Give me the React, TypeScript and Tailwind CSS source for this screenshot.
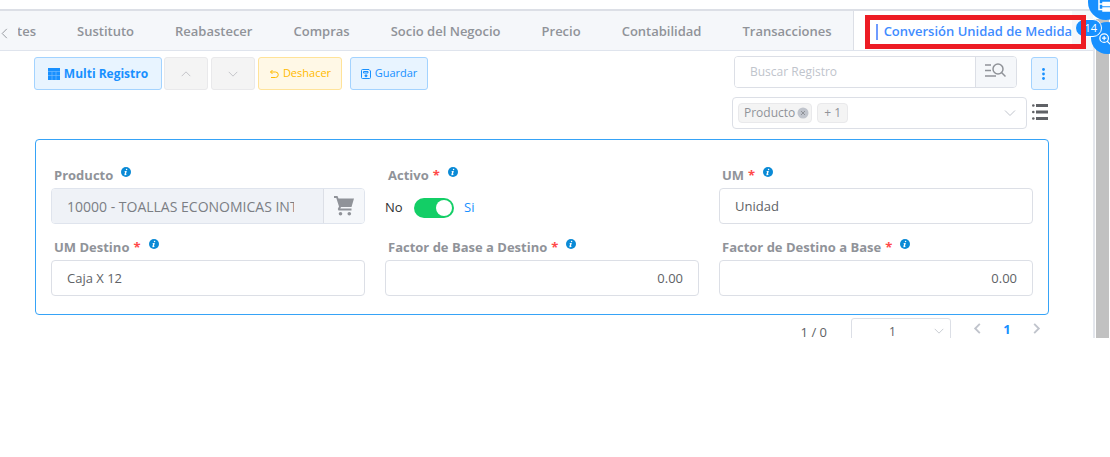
import React from "react";

const tabs = [
  "Sustituto",
  "Reabastecer",
  "Compras",
  "Socio del Negocio",
  "Precio",
  "Contabilidad",
  "Transacciones",
];

function Chevron({ dir, className }: { dir: "up" | "down" | "left" | "right"; className: string }) {
  const d = {
    up: "M2 9.5 7 4.5l5 5",
    down: "M2 4.5l5 5 5-5",
    left: "M9.5 2l-5 5 5 5",
    right: "M4.5 2l5 5-5 5",
  }[dir];
  return (
    <svg viewBox="0 0 14 14" className={className} fill="none" stroke="currentColor" aria-hidden="true">
      <path d={d} />
    </svg>
  );
}

function InfoIcon() {
  return (
    <svg viewBox="0 0 20 20" className="mb-2 ml-2 size-[10px] shrink-0" aria-hidden="true">
      <circle cx="10" cy="10" r="10" fill="#0a8ad6" />
      <path
        d="M11.2 3.4a1.5 1.5 0 1 1-.1 3 1.5 1.5 0 0 1 .1-3ZM7.4 8h4.2l-1.7 6.4c-.1.5.3.5 1.4-.4l.5.6c-1.4 1.5-2.6 2-3.6 2-1.200 0-1.600-.8-1.300-1.900L8.200 9.300H7Z"
        fill="#fff"
      />
    </svg>
  );
}

function Field({
  id,
  label,
  required,
  children,
}: {
  id: string;
  label: string;
  required?: boolean;
  children: React.ReactNode;
}) {
  return (
    <div className="min-w-0">
      <label htmlFor={id} className="flex h-9 items-center pl-[3px] pt-3 text-[13px] font-bold text-[#909399]">
        {label}
        {required && <span className="ml-1 text-[#ff4949]">*</span>}
        <InfoIcon />
      </label>
      {children}
    </div>
  );
}

const inputClass =
  "h-9 w-full min-w-0 rounded border border-[#dcdfe6] bg-white px-[15px] text-[13px] text-[#606266] outline-none";

function Tabs() {
  return (
    <nav className="relative flex h-[42px] border-y border-b-[#dfe4ed] border-t-2 border-t-[#dcdfe6] bg-[#f5f7fa]">
      <button type="button" aria-label="Anterior" className="w-[18px] shrink-0 pt-[6px] text-[#909399]">
        <Chevron dir="left" className="-ml-[2px] size-[13px]" />
      </button>
      <div className="mr-5 flex min-w-0 flex-1 gap-px overflow-hidden text-[13px] font-semibold text-[#909399]">
        <button type="button" className="flex w-[38px] shrink-0 items-center justify-end whitespace-nowrap pr-5 pt-[3px]">
          Componentes
        </button>
        {tabs.map((t) => (
          <button key={t} type="button" className="shrink-0 whitespace-nowrap px-5 pt-[3px]">
            {t}
          </button>
        ))}
        <button
          type="button"
          className="flex shrink-0 items-center whitespace-nowrap border-l border-[#dcdfe6] bg-white pl-[22px] pt-[3px] text-[#3f8cff]"
        >
          <span className="mr-[6px] h-4 w-[2px] bg-[#6f9bff]" />
          Conversión Unidad de Medida
        </button>
      </div>
    </nav>
  );
}

function FloatingTools() {
  return (
    <>
      <button
        type="button"
        aria-label="Estructura"
        className="absolute -right-[14px] -top-[16px] size-9 rounded-full bg-[#1890ff] text-white"
      >
        <svg viewBox="0 0 16 16" className="absolute left-2 top-[14px] size-4" fill="none" stroke="currentColor" strokeWidth="1.500" aria-hidden="true">
          <path d="M3 1v10.500h4M3 6h4" />
          <path d="M7 4.500h8v3H7zM7 10h8v3H7zM1 1h8" fill="currentColor" />
        </svg>
      </button>
      <button
        type="button"
        aria-label="Acercar"
        className="absolute -right-[13px] top-[22px] size-8 rounded-full bg-[#1890ff] text-white"
      >
        <svg viewBox="0 0 14 14" className="absolute left-2 top-[11px] size-3" fill="none" stroke="currentColor" strokeWidth="1.400" aria-hidden="true">
          <circle cx="6" cy="6" r="5" />
          <path d="M9.600 9.600 13.500 13.500M3.500 6h5M6 3.500v5" />
        </svg>
      </button>
      <span className="absolute right-[8px] top-[19px] h-[18px] rounded-full border border-white bg-[#1890ff] pl-2 pr-1 text-[11px] leading-4 text-white">
        14
      </span>
      <div className="absolute right-[24px] top-[15px] h-[34px] w-[221px] border-[5px] border-[#ed1c24]" />
    </>
  );
}

function Toolbar() {
  return (
    <div className="flex items-start justify-between pl-[34px] pr-[35px] pt-[5px]">
      <div className="flex pt-px text-[11px]">
        <button
          type="button"
          className="flex h-[33px] w-32 items-center justify-center gap-1 rounded-[3px] border border-[#a3d3ff] bg-[#e8f4ff] text-[12px] font-bold text-[#1890ff]"
        >
          <svg viewBox="0 0 12 12" className="size-3" aria-hidden="true">
            <path fill="#1890ff" d="M0 0h12v12H0z" />
            <path stroke="#7fc1ff" strokeWidth=".6" d="M0 3.500h12M0 7.500h12M4 3.500V12M8 3.500V12" />
          </svg>
          Multi Registro
        </button>
        <button
          type="button"
          aria-label="Subir"
          className="ml-[2px] flex h-[33px] w-11 items-center justify-center rounded-[3px] border border-[#e9e9eb] bg-[#f4f4f4] text-[#bcbec2]"
        >
          <Chevron dir="up" className="size-3" />
        </button>
        <button
          type="button"
          aria-label="Bajar"
          className="ml-[3px] flex h-[33px] w-11 items-center justify-center rounded-[3px] border border-[#e9e9eb] bg-[#f4f4f4] text-[#bcbec2]"
        >
          <Chevron dir="down" className="size-3" />
        </button>
        <button
          type="button"
          className="ml-[3px] flex h-[33px] w-[84px] items-center justify-center gap-1 rounded-[3px] border border-[#ffe399] bg-[#fff8e6] text-[#ffba00]"
        >
          <svg viewBox="0 0 10 10" className="size-[10px]" fill="none" stroke="currentColor" aria-hidden="true">
            <path d="M3.500 1 1.500 3l2 2M1.500 3H6.500a2.500 2.500 0 0 1 0 5.500H2" />
          </svg>
          Deshacer
        </button>
        <button
          type="button"
          className="ml-2 flex h-[33px] w-[78px] items-center justify-center gap-1 rounded-[3px] border border-[#a3d3ff] bg-[#e8f4ff] text-[#1890ff]"
        >
          <svg viewBox="0 0 10 10" className="size-[10px]" fill="none" stroke="currentColor" aria-hidden="true">
            <path d="M.5 1.500a1 1 0 0 1 1-1H8L9.500 2v6.500a1 1 0 0 1-1 1h-7a1 1 0 0 1-1-1ZM2.500 2.500h4.500v1.500H2.500z" />
            <circle cx="5" cy="6.800" r="1" fill="currentColor" />
          </svg>
          Guardar
        </button>
      </div>

      <div className="flex flex-col gap-[7px]">
        <div className="flex pl-[2px]">
          <div className="flex h-8 w-[283px] overflow-hidden rounded border border-[#dcdfe6]">
            <input
              type="text"
              aria-label="Buscar Registro"
              placeholder="Buscar Registro"
              className="min-w-0 flex-1 bg-white px-[15px] text-[12px] text-[#606266] outline-none placeholder:text-[#c0c4cc]"
            />
            <button
              type="button"
              aria-label="Buscar"
              className="flex w-[41px] items-center justify-center border-l border-[#dcdfe6] bg-[#f5f7fa] pb-1 pr-[2px] text-[#909399]"
            >
              <svg viewBox="0 0 21 15" className="h-[15px] w-[21px]" fill="none" stroke="currentColor" strokeWidth="1.500" aria-hidden="true">
                <circle cx="13" cy="6" r="5" />
                <path d="M16.500 9.500 20.500 13.500M0 2h6M0 7.500h6M0 13h11" />
              </svg>
            </button>
          </div>
          <button
            type="button"
            aria-label="Más opciones"
            className="ml-[14px] mt-px flex h-[33px] w-[27px] items-center justify-center rounded-[3px] border border-[#a3d3ff] bg-[#e8f4ff] pr-[2px] text-[#1890ff]"
          >
            <svg viewBox="0 0 3 12" className="mt-px h-3 w-[3px]" fill="currentColor" aria-hidden="true">
              <circle cx="1.500" cy="1.500" r="1.400" />
              <circle cx="1.500" cy="6" r="1.400" />
              <circle cx="1.500" cy="10.500" r="1.400" />
            </svg>
          </button>
        </div>
        <div className="flex items-center">
          <div className="flex h-8 w-[295px] items-center rounded border border-[#dcdfe6] bg-white pl-[5px] pr-[9px] text-[12px] text-[#909399]">
            <span className="flex h-5 items-center rounded border border-[#e9e9eb] bg-[#f4f4f4] pl-[5px] pr-[2px]">
              Producto
              <button type="button" aria-label="Quitar Producto" className="ml-[2px]">
                <svg viewBox="0 0 12 12" className="size-3" aria-hidden="true">
                  <circle cx="6" cy="6" r="5.500" fill="#c0c4cc" />
                  <path d="M4 4l4 4M8 4 4 8" stroke="#909399" />
                </svg>
              </button>
            </span>
            <span className="ml-[5px] flex h-5 items-center rounded border border-[#e9e9eb] bg-[#f4f4f4] px-[6px]">
              + 1
            </span>
            <button type="button" aria-label="Desplegar campos" className="ml-auto text-[#c0c4cc]">
              <Chevron dir="down" className="size-[14px]" />
            </button>
          </div>
          <button type="button" aria-label="Lista" className="mb-[2px] ml-[5px] text-[#606266]">
            <svg viewBox="0 0 16 16" className="size-4" fill="currentColor" aria-hidden="true">
              <path d="M4 0h12v3H4zM4 6.500h12v3H4zM4 13h12v3H4z" />
              <circle cx="1.300" cy="1.500" r="1.300" />
              <circle cx="1.300" cy="8" r="1.300" />
              <circle cx="1.300" cy="14.500" r="1.300" />
            </svg>
          </button>
        </div>
      </div>
    </div>
  );
}

function RecordForm() {
  return (
    <form className="ml-[35px] mr-[44px] mt-[10px] grid grid-cols-3 gap-x-5 rounded border border-[#36a3f7] px-[15px] pb-[18px] pt-3">
      <Field id="producto" label="Producto">
        <div className="flex h-9 overflow-hidden rounded border border-[#dfe4ed]">
          <div className="flex min-w-0 flex-1 bg-[#eff2f7] pl-[15px] pr-[29px]">
            <input
              id="producto"
              readOnly
              defaultValue="10000 - TOALLAS ECONOMICAS INTERFOLIADAS"
              className="w-full min-w-0 bg-transparent text-[14px] text-[#7b7e84] outline-none"
            />
          </div>
          <button
            type="button"
            aria-label="Buscar producto"
            className="flex w-[41px] items-center justify-center border-l border-[#dcdfe6] bg-[#f5f7fa] text-[#909399]"
          >
            <svg viewBox="0 0 20 20" className="size-5" fill="currentColor" aria-hidden="true">
              <path d="M0 0h3.500l1 2.500H20L17.500 11H7l-.7 1.500H17.500V14.500H4.500L3.800 13 5 10.500 2.300 2H0Z" />
              <circle cx="6.500" cy="17.800" r="1.800" />
              <circle cx="15.300" cy="17.800" r="1.800" />
            </svg>
          </button>
        </div>
      </Field>
      <Field id="activo" label="Activo" required>
        <div className="flex h-9 items-center pt-1 text-[13px]">
          <span className="w-[29px] text-[#303133]">No</span>
          <input
            id="activo"
            type="checkbox"
            role="switch"
            defaultChecked
            className="relative h-5 w-10 appearance-none rounded-full bg-[#13ce66] after:absolute after:right-[2px] after:top-[2px] after:size-4 after:rounded-full after:bg-white"
          />
          <span className="ml-[10px] text-[#1890ff]">Si</span>
        </div>
      </Field>
      <Field id="um" label="UM" required>
        <input id="um" defaultValue="Unidad" className={inputClass} />
      </Field>
      <Field id="um-destino" label="UM Destino" required>
        <input id="um-destino" defaultValue="Caja X 12" className={inputClass} />
      </Field>
      <Field id="factor-base" label="Factor de Base a Destino" required>
        <input id="factor-base" defaultValue="0.00" className={`${inputClass} text-right`} />
      </Field>
      <Field id="factor-destino" label="Factor de Destino a Base" required>
        <input id="factor-destino" defaultValue="0.00" className={`${inputClass} text-right`} />
      </Field>
    </form>
  );
}

function Pagination() {
  return (
    <div className="mr-[44px] flex h-[23px] items-start justify-end overflow-hidden pt-[3px] text-[13px] text-[#606266]">
      <span className="mr-6 leading-7">1 / 0</span>
      <div className="relative w-[100px]">
        <select
          aria-label="Página"
          className="h-7 w-full appearance-none rounded-[3px] border border-[#dcdfe6] bg-white pl-[37px] text-[12px] outline-none"
        >
          <option>1</option>
        </select>
        <Chevron dir="down" className="pointer-events-none absolute right-[6px] top-[7px] size-3 text-[#c0c4cc]" />
      </div>
      <button type="button" aria-label="Página anterior" className="ml-5 mt-1 text-[#c0c4cc]">
        <Chevron dir="left" className="size-[13px] stroke-2" />
      </button>
      <button type="button" className="w-[46px] font-bold leading-[22px] text-[#1890ff]">
        1
      </button>
      <button type="button" aria-label="Página siguiente" className="mr-[6px] mt-1 text-[#c0c4cc]">
        <Chevron dir="right" className="size-[13px] stroke-2" />
      </button>
    </div>
  );
}

export default function App() {
  return (
    <div className="relative overflow-hidden bg-white pt-[9px] font-['Open_Sans','Noto_Sans',sans-serif]">
      <div className="flex">
        <main className="min-w-0 flex-1">
          <Tabs />
          <Toolbar />
          <RecordForm />
          <Pagination />
        </main>
        <div className="mt-[10px] w-[17px] border-l-2 border-[#e4e7ed] pl-px pr-px">
          <div className="h-full bg-[#c1c1c1]" />
        </div>
      </div>
      <FloatingTools />
    </div>
  );
}
